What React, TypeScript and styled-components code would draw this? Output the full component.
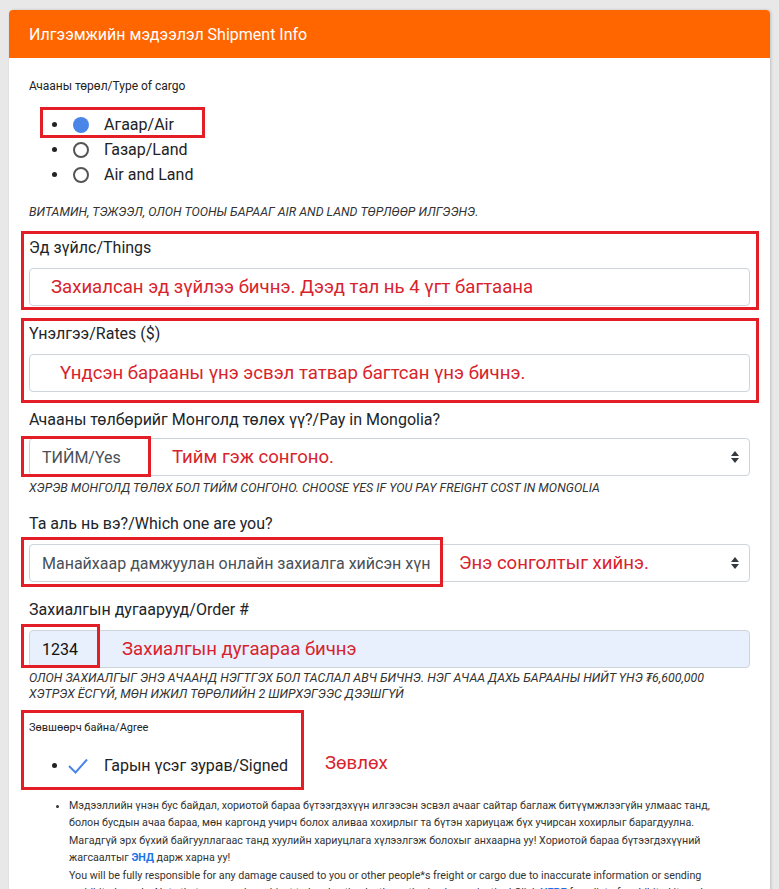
import React from 'react';
import styled, { createGlobalStyle } from 'styled-components';

const GlobalStyle = createGlobalStyle`
  html, body {
    margin: 0;
    padding: 0;
  }
  body {
    background: #e8e8e8;
    font-family: Roboto, "Noto Sans", Arial, sans-serif;
    color: #212529;
  }
`;

const Card = styled.div`
  margin: 10px 9px 0;
  background: #fff;
  border-radius: 4px 4px 0 0;
  box-shadow: 1px 0 3px rgba(0, 0, 0, 0.18);
  overflow: hidden;
`;

const Header = styled.div`
  background: #ff6600;
  color: #fff;
  height: 48px;
  padding: 0 20px;
  display: flex;
  align-items: center;
  font-size: 16px;
`;

const Body = styled.div`
  padding: 20px 20px 0;
`;

const SmallLabel = styled.div<{ $size?: number }>`
  font-size: ${(p) => p.$size ?? 11}px;
  line-height: 16px;
  color: #222;
`;

const Label = styled.div<{ $mt?: number; $mb?: number }>`
  font-size: 16px;
  line-height: 24px;
  color: #212529;
  margin-top: ${(p) => p.$mt ?? 0}px;
  margin-bottom: ${(p) => p.$mb ?? 8}px;
`;

const Hint = styled.div<{ $mt?: number }>`
  font-size: 12.4px;
  line-height: 16px;
  font-style: italic;
  text-transform: uppercase;
  color: #333;
  margin-top: ${(p) => p.$mt ?? 4}px;
`;

const OptionList = styled.ul<{ $mt?: number }>`
  list-style: disc;
  margin: ${(p) => p.$mt ?? 0}px 0 0;
  padding-left: 40px;
`;

const Option = styled.li`
  position: relative;
  font-size: 16px;
  line-height: 25px;
  color: #222;
`;

const OptionBody = styled.span`
  display: inline-flex;
  align-items: center;
  vertical-align: top;
  height: 25px;
`;

const Radio = styled.span<{ $checked?: boolean }>`
  box-sizing: border-box;
  width: 16px;
  height: 16px;
  border-radius: 50%;
  margin: 0 15px 0 4px;
  background: ${(p) => (p.$checked ? '#4a86e8' : '#fff')};
  border: ${(p) => (p.$checked ? 'none' : '2px solid #555')};
`;

const Check = styled.svg`
  width: 20px;
  height: 16px;
  margin: 0 16px 0 -1px;
`;

const Frame = styled.div<{ $top: number; $left: number; $w: number; $h: number }>`
  position: absolute;
  top: ${(p) => p.$top}px;
  left: ${(p) => p.$left}px;
  width: ${(p) => p.$w}px;
  height: ${(p) => p.$h}px;
  box-sizing: border-box;
  border: 3px solid #e31e26;
  pointer-events: none;
`;

const Callout = styled.div<{ $mt: number; $pad: string }>`
  border: 3px solid #e31e26;
  margin: ${(p) => p.$mt}px -9px 0 -8px;
  padding: ${(p) => p.$pad};
`;

const Control = styled.div<{ $filled?: boolean }>`
  position: relative;
  box-sizing: border-box;
  height: 38px;
  display: flex;
  align-items: center;
  padding: 0 10px 0 12px;
  border: 1px solid #ced4da;
  border-radius: 4px;
  background: ${(p) => (p.$filled ? '#e8f0fe' : '#fff')};
  font-size: 16px;
  color: #495057;
`;

const Value = styled.span<{ $dark?: boolean }>`
  color: ${(p) => (p.$dark ? '#111' : '#495057')};
  white-space: nowrap;
`;

const Note = styled.span<{ $left: number }>`
  position: absolute;
  left: ${(p) => p.$left}px;
  top: 50%;
  transform: translateY(-50%);
  font-size: 18.6px;
  color: #d8232c;
  white-space: nowrap;
`;

const Arrow = styled.svg`
  margin-left: auto;
  width: 8px;
  height: 12px;
`;

const AgreeRow = styled.div`
  display: flex;
  align-items: flex-start;
  margin: 8px 0 0 -8px;
`;

const AgreeBox = styled.div`
  box-sizing: border-box;
  width: 283px;
  height: 80px;
  border: 3px solid #e31e26;
  padding: 7px 5px 0;
`;

const SideNote = styled.span`
  margin: 41px 0 0 21px;
  font-size: 18.6px;
  line-height: 24px;
  color: #d8232c;
`;

const TermsList = styled.ul`
  list-style: disc;
  margin: 7px 0 0;
  padding-left: 40px;
  font-size: 10.7px;
  line-height: 17.4px;
  color: #333;
  white-space: nowrap;
`;

const TermsLink = styled.a`
  color: #1a73e8;
  font-weight: 700;
  text-decoration: none;
`;

const SelectArrow = () => (
  <Arrow viewBox="0 0 8 12">
    <path d="M0 5 L4 0 L8 5 Z M0 7 L4 12 L8 7 Z" fill="#343a40" />
  </Arrow>
);

export default function App() {
  return (
    <>
      <GlobalStyle />
      <Card>
        <Header>Илгээмжийн мэдээлэл Shipment Info</Header>
        <Body>
          <SmallLabel $size={12}>Ачааны төрөл/Type of cargo</SmallLabel>
          <OptionList $mt={18}>
            <Option>
              <OptionBody>
                <Radio $checked />
                Агаар/Air
              </OptionBody>
              <Frame $top={-5} $left={-29} $w={165} $h={31} />
            </Option>
            <Option>
              <OptionBody>
                <Radio />
                Газар/Land
              </OptionBody>
            </Option>
            <Option>
              <OptionBody>
                <Radio />
                Air and Land
              </OptionBody>
            </Option>
          </OptionList>
          <Hint $mt={17}>Витамин, тэжээл, олон тооны барааг air and land төрлөөр илгээнэ.</Hint>

          <Callout $mt={11} $pad="2px 6px 1px 5px">
            <Label>Эд зүйлс/Things</Label>
            <Control>
              <Note $left={21}>Захиалсан эд зүйлээ бичнэ. Дээд тал нь 4 үгт багтаана</Note>
            </Control>
          </Callout>

          <Callout $mt={8} $pad="1px 6px 8px 5px">
            <Label>Үнэлгээ/Rates ($)</Label>
            <Control>
              <Note $left={30}>Үндсэн барааны үнэ эсвэл татвар багтсан үнэ бичнэ.</Note>
            </Control>
          </Callout>

          <Label $mt={5} $mb={6}>Ачааны төлбөрийг Монголд төлөх үү?/Pay in Mongolia?</Label>
          <Control>
            <Value>ТИЙМ/Yes</Value>
            <Note $left={142}>Тийм гэж сонгоно.</Note>
            <SelectArrow />
            <Frame $top={-3} $left={-9} $w={130} $h={41} />
          </Control>
          <Hint>Хэрэв Монголд төлөх бол тийм сонгоно. Choose yes if you pay freight cost in Mongolia</Hint>

          <Label $mt={16}>Та аль нь вэ?/Which one are you?</Label>
          <Control>
            <Value>Манайхаар дамжуулан онлайн захиалга хийсэн хүн</Value>
            <Note $left={429}>Энэ сонголтыг хийнэ.</Note>
            <SelectArrow />
            <Frame $top={-8} $left={-9} $w={422} $h={50} />
          </Control>

          <Label $mt={16}>Захиалгын дугаарууд/Order #</Label>
          <Control $filled>
            <Value $dark>1234</Value>
            <Note $left={92}>Захиалгын дугаараа бичнэ</Note>
            <Frame $top={-7} $left={-9} $w={79} $h={44} />
          </Control>
          <Hint $mt={2}>
            Олон захиалгыг энэ ачаанд нэгтгэх бол таслал авч бичнэ. Нэг ачаа дахь барааны нийт үнэ ₮6,600,000
            <br />
            хэтрэх ёсгүй, мөн ижил төрөлийн 2 ширхэгээс дээшгүй
          </Hint>

          <AgreeRow>
            <AgreeBox>
              <SmallLabel>Зөвшөөрч байна/Agree</SmallLabel>
              <OptionList $mt={17}>
                <Option>
                  <OptionBody>
                    <Check viewBox="0 0 20 16">
                      <path d="M1 8 L7.5 14.5 L19 1.5" fill="none" stroke="#4a86e8" strokeWidth="2" />
                    </Check>
                    Гарын үсэг зурав/Signed
                  </OptionBody>
                </Option>
              </OptionList>
            </AgreeBox>
            <SideNote>Зөвлөх</SideNote>
          </AgreeRow>

          <TermsList>
            <li>
              Мэдээллийн үнэн бус байдал, хориотой бараа бүтээгдэхүүн илгээсэн эсвэл ачааг сайтар баглаж битүүмжлээгүйн улмаас танд,
              <br />
              болон бусдын ачаа бараа, мөн каргонд учирч болох аливаа хохирлыг та бүтэн хариуцаж бүх учирсан хохирлыг барагдуулна.
              <br />
              Магадгүй эрх бүхий байгууллагаас танд хуулийн хариуцлага хүлээлгэж болохыг анхаарна уу! Хориотой бараа бүтээгдэхүүний
              <br />
              жагсаалтыг <TermsLink href="#">ЭНД</TermsLink> дарж харна уу!
              <br />
              You will be fully responsible for any damage caused to you or other people*s freight or cargo due to inaccurate information or sending
              <br />
              prohibited goods. Note that you may be subject to legal action by the authorized organization! Click{' '}
              <TermsLink href="#">HERE</TermsLink> for a list of prohibited items!
            </li>
          </TermsList>
        </Body>
      </Card>
    </>
  );
}
